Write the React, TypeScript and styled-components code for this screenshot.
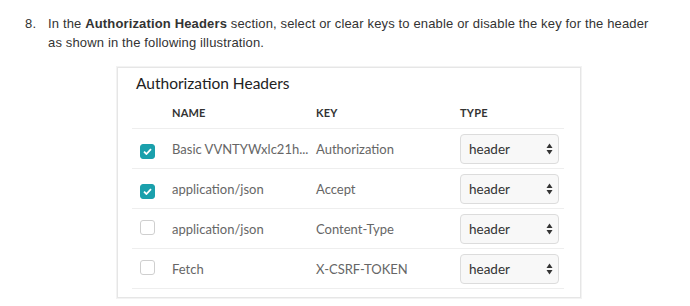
import React from "react";
import styled, { createGlobalStyle } from "styled-components";

const Global = createGlobalStyle`
  html, body { margin: 0; padding: 0; background: #fff; }
  body { width: 690px; height: 306px; overflow: hidden; }
`;

const Page = styled.div`
  padding: 14px 0 0 25px;
`;

const Step = styled.div`
  display: flex;
  font-family: "Liberation Sans", Arial, sans-serif;
  font-size: 13px;
  letter-spacing: 0.15px;
  line-height: 19px;
  color: #333;
`;

const StepNum = styled.span`
  flex: 0 0 23px;
`;

const StepText = styled.p`
  margin: 0;
  width: 608px;
  b { font-weight: bold; }
`;

const Panel = styled.div`
  margin: 15px 0 0 92px;
  width: 462px;
  height: 229px;
  border: 1px solid #e6e6e6;
  box-shadow: 0 0 0 1px #f3f3f3;
  font-family: Lato, "Open Sans", sans-serif;
`;

const Title = styled.div`
  font-size: 15.5px;
  color: #222;
  padding: 5px 0 0 18px;
  height: 21px;
  line-height: 21px;
`;

const Table = styled.div`
  margin: 0 16px 0 14px;
`;

const Grid = styled.div<{ $head?: boolean }>`
  display: grid;
  grid-template-columns: 40px 144px 144px 1fr;
  align-items: center;
  height: ${(p) => (p.$head ? "35px" : "40px")};
  border-bottom: 1px solid #eeeeee;
  box-sizing: border-box;
  ${(p) => (p.$head ? "padding-top: 2px;" : "")}
`;

const Head = styled.div`
  font-size: 11px;
  font-weight: bold;
  color: #333;
  letter-spacing: 0.2px;
`;

const Cell = styled.div`
  font-size: 13px;
  color: #666;
  white-space: nowrap;
`;

const Box = styled.span<{ $on: boolean }>`
  display: inline-flex;
  align-items: center;
  justify-content: center;
  margin-left: 8px;
  width: 15px;
  height: 15px;
  box-sizing: border-box;
  border-radius: 3px;
  background: ${(p) => (p.$on ? "#1aa0ac" : "#fff")};
  border: 1px solid ${(p) => (p.$on ? "#1aa0ac" : "#cfcfcf")};
`;

const Select = styled.div`
  display: flex;
  align-items: center;
  justify-content: space-between;
  width: 99px;
  height: 30px;
  box-sizing: border-box;
  border: 1px solid #dcdcdc;
  border-radius: 4px;
  background: #f8f8f8;
  padding: 0 5px 0 8px;
  font-size: 13.5px;
  color: #333;
`;

const rows = [
  { on: true, name: "Basic VVNTYWxlc21h...", key: "Authorization" },
  { on: true, name: "application/json", key: "Accept" },
  { on: false, name: "application/json", key: "Content-Type" },
  { on: false, name: "Fetch", key: "X-CSRF-TOKEN" },
];

const Check = () => (
  <svg width="9" height="7" viewBox="0 0 9 7">
    <path d="M1 3.6 L3.4 6 L8 1.2" fill="none" stroke="#fff" strokeWidth="1.8" />
  </svg>
);

const Arrows = () => (
  <svg width="7" height="12" viewBox="0 0 7 12">
    <path d="M3.5 0.5 L6.5 5 L0.5 5 Z" fill="#333" />
    <path d="M3.5 11.5 L6.5 7 L0.5 7 Z" fill="#333" />
  </svg>
);

export default function App() {
  return (
    <>
      <Global />
      <Page>
        <Step>
          <StepNum>8.</StepNum>
          <StepText>
            In the <b>Authorization Headers</b> section, select or clear keys to enable or disable the key for the header as shown in the following illustration.
          </StepText>
        </Step>
        <Panel>
          <Title>Authorization Headers</Title>
          <Table>
            <Grid $head>
              <span />
              <Head>NAME</Head>
              <Head>KEY</Head>
              <Head>TYPE</Head>
            </Grid>
            {rows.map((r, i) => (
              <Grid key={i}>
                <div>
                  <Box $on={r.on}>{r.on && <Check />}</Box>
                </div>
                <Cell>{r.name}</Cell>
                <Cell>{r.key}</Cell>
                <Select>
                  <span>header</span>
                  <Arrows />
                </Select>
              </Grid>
            ))}
          </Table>
        </Panel>
      </Page>
    </>
  );
}
